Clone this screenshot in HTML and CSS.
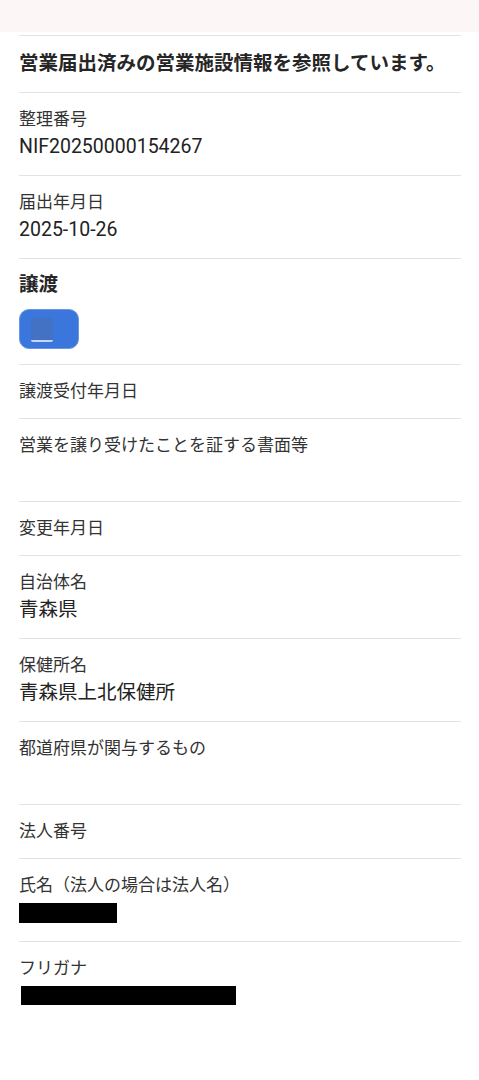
FILE: index.html
```html
<!DOCTYPE html>
<html lang="ja">
<head>
<meta charset="utf-8">
<link rel="stylesheet" href="styles.css">
</head>
<body>
<div class="topbar"></div>
<main class="content">
  <div class="heading">営業届出済みの営業施設情報を参照しています。</div>
  <div class="row"><div class="label">整理番号</div><div class="value">NIF20250000154267</div></div>
  <div class="row"><div class="label">届出年月日</div><div class="value">2025-10-26</div></div>
  <div class="row toggle-row">
    <div class="label strong">譲渡</div>
    <div class="toggle"><span class="toggle-box"></span><span class="toggle-line"></span></div>
  </div>
  <div class="row"><div class="label">譲渡受付年月日</div></div>
  <div class="row"><div class="label">営業を譲り受けたことを証する書面等</div><div class="value">&nbsp;</div></div>
  <div class="row"><div class="label">変更年月日</div></div>
  <div class="row"><div class="label">自治体名</div><div class="value">青森県</div></div>
  <div class="row"><div class="label">保健所名</div><div class="value">青森県上北保健所</div></div>
  <div class="row"><div class="label">都道府県が関与するもの</div><div class="value">&nbsp;</div></div>
  <div class="row"><div class="label">法人番号</div></div>
  <div class="row"><div class="label">氏名（法人の場合は法人名）</div><div class="value"><span class="redact short"></span></div></div>
  <div class="row last"><div class="label">フリガナ</div><div class="value"><span class="redact long"></span></div></div>
</main>
</body>
</html>
```
FILE: styles.css
```css
html, body {
  margin: 0;
  padding: 0;
  background: #ffffff;
}
body {
  font-family: Roboto, "Noto Sans CJK JP", sans-serif;
  color: #2a2a2a;
}
.topbar {
  height: 32px;
  background: #fcf6f7;
}
.content {
  margin-top: 3px;
  padding: 0 18px 0 19px;
}
.heading {
  border-top: 1px solid #e2e2e2;
  padding: 14px 0;
  font-size: 19.5px;
  line-height: 28px;
  font-weight: 700;
  color: #262626;
  white-space: nowrap;
}
.row {
  border-top: 1px solid #e2e2e2;
  padding: 14px 0 15px;
}
.row.last {
  padding-bottom: 20px;
}
.label {
  font-size: 17px;
  line-height: 24px;
  color: #333333;
}
.label.strong {
  font-size: 19.5px;
  font-weight: 700;
  color: #262626;
}
.value {
  font-size: 19.5px;
  line-height: 29px;
  min-height: 29px;
  padding-top: 1px;
  margin-bottom: -1px;
  color: #222222;
  display: flex;
  align-items: center;
}
.toggle-row .toggle {
  margin-top: 12px;
}
.toggle {
  position: relative;
  width: 60px;
  height: 40px;
  box-sizing: border-box;
  border-radius: 10px;
  background: #3a76db;
  border: 1px solid #6a98e4;
}
.toggle-box {
  position: absolute;
  left: 11px;
  top: 8px;
  width: 22px;
  height: 22px;
  background: #4371c4;
  border-radius: 2px;
}
.toggle-line {
  position: absolute;
  left: 11px;
  top: 30px;
  width: 22px;
  height: 2px;
  border-radius: 0 0 3px 3px;
  background: #c6d6f3;
}
.redact {
  display: inline-block;
  background: #000000;
}
.redact.short {
  width: 98px;
  height: 20px;
}
.redact.long {
  width: 215px;
  height: 19px;
  margin-left: 2px;
}
```
